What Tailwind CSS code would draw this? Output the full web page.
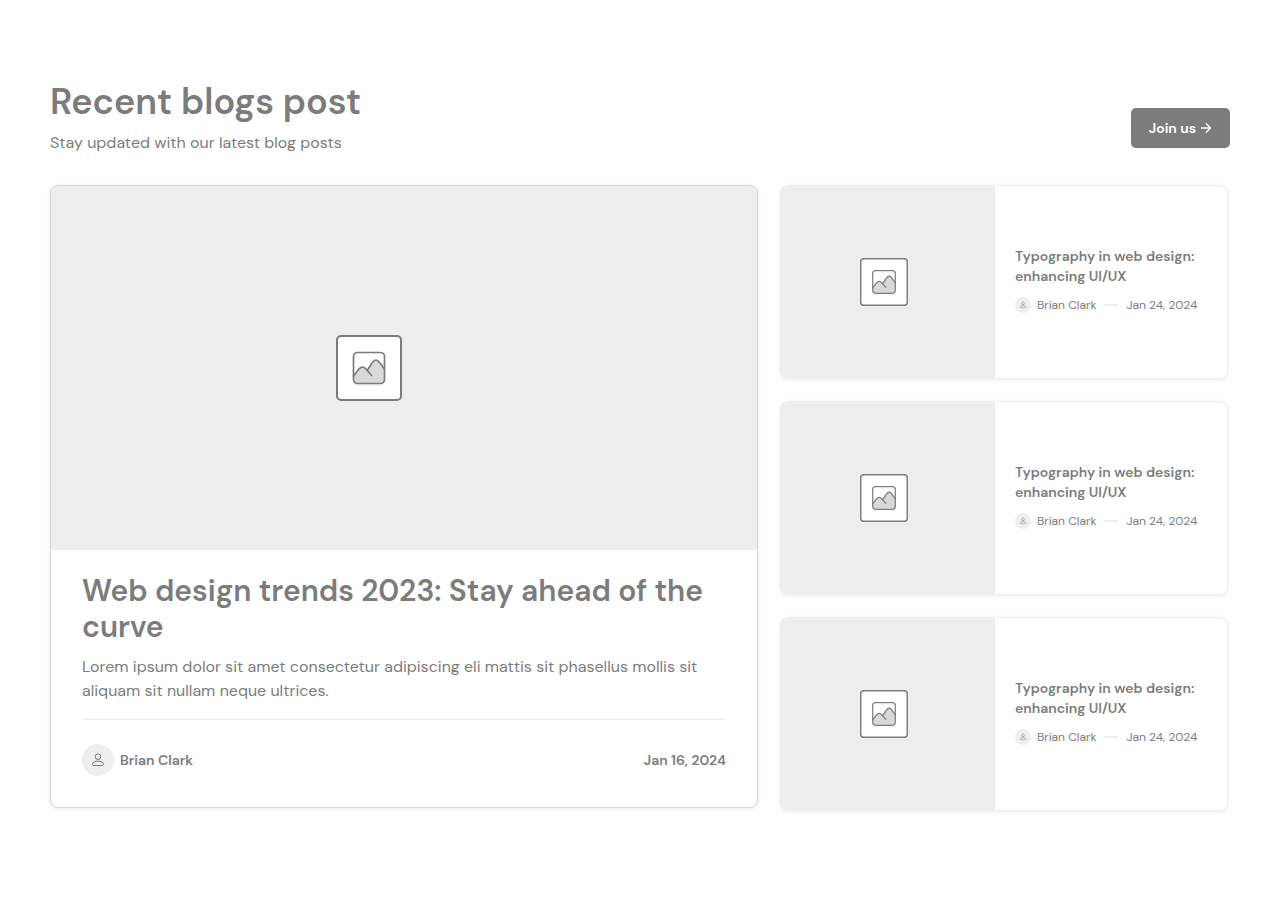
<!DOCTYPE html>
<html lang="en">
<head>
<meta charset="utf-8">
<meta name="viewport" content="width=device-width, initial-scale=1">
<title>Recent blogs post</title>
<script src="https://cdn.jsdelivr.net/npm/@tailwindcss/browser@4"></script>
</head>
<body class="bg-white font-['DM_Sans','Inter',sans-serif] text-[#7c7c7c] antialiased">
<svg class="absolute h-0 w-0" aria-hidden="true">
  <symbol id="picture" viewBox="0 0 66 66">
    <rect x="1" y="1" width="64" height="64" rx="4" fill="#fff" stroke="#7c7c7c" stroke-width="2"/>
    <rect x="17" y="19" width="32" height="32" rx="5" fill="#000" opacity="0.04"/>
    <rect x="17.500" y="17.500" width="31" height="31" rx="4" fill="#fff"/>
    <path d="M17.500 41L23 34q3.500-4 7 0l1.500 1.500L36 28q4-6 8 0l4.500 6V44q0 4.500-4.500 4.500H22q-4.500 0-4.500-4.500Z" fill="#d9d9d9"/>
    <path d="M17.500 41L23 34q3.500-4 7 0l5.500 6.500M31.500 35L36 28q4-6 8 0l4.500 6" fill="none" stroke="#7c7c7c" stroke-width="1.700" stroke-linecap="round" stroke-linejoin="round"/>
    <rect x="17.500" y="17.500" width="31" height="31" rx="4" fill="none" stroke="#7c7c7c" stroke-width="1.700"/>
  </symbol>
  <symbol id="person" viewBox="0 0 32 32">
    <circle cx="16" cy="16" r="16" fill="#eee"/>
    <circle cx="16" cy="12.700" r="2.800" fill="none" stroke="#7c7c7c"/>
    <path d="M10.500 20.300c0-4.200 11-4.200 11 0 0 .8-.4 1.200-1.200 1.200h-8.600c-.8 0-1.200-.4-1.200-1.200Z" fill="none" stroke="#7c7c7c"/>
  </symbol>
</svg>
<main class="px-[50px] pt-20 pb-20">
  <header class="flex items-end justify-between">
    <div>
      <h1 class="text-4xl leading-[43px] font-semibold">Recent blogs post</h1>
      <p class="mt-2 text-base leading-6">Stay updated with our latest blog posts</p>
    </div>
    <button type="button" class="mb-[7px] flex h-10 items-center gap-1 rounded-[5px] bg-[#7c7c7c] px-[18px] text-sm font-semibold text-white shadow-xs">
      Join us
      <svg class="h-3 w-3" viewBox="0 0 12 12" fill="none" stroke="currentColor" stroke-width="1.300" aria-hidden="true"><path d="M1 6h9.500M6 1.500L10.500 6 6 10.500"/></svg>
    </button>
  </header>

  <div class="mt-[30px] grid grid-cols-[708fr_448fr] items-start gap-[22px] pr-[2px]">
    <article class="overflow-hidden rounded-lg border border-[#d6d6d6] bg-white shadow-[0_1px_4px_rgba(0,0,0,0.08)]">
      <div class="flex h-[364px] items-center justify-center bg-[#eee] pr-[70px]">
        <svg class="h-[66px] w-[66px]" role="img" aria-label="Image placeholder"><use href="#picture"/></svg>
      </div>
      <div class="px-[31px] pt-[23px] pb-[31px]">
        <h2 class="text-3xl leading-9 font-semibold">Web design trends 2023: Stay ahead of the curve</h2>
        <p class="mt-[10px] text-base leading-6">Lorem ipsum dolor sit amet consectetur adipiscing eli mattis sit phasellus mollis sit aliquam sit nullam neque ultrices.</p>
        <div class="mt-4 flex items-center justify-between border-t border-[#eee] pt-6 text-sm font-semibold">
          <div class="flex items-center gap-[6px]">
            <svg class="h-8 w-8" aria-hidden="true"><use href="#person"/></svg>
            <span>Brian Clark</span>
          </div>
          <time datetime="2024-01-16">Jan 16, 2024</time>
        </div>
      </div>
    </article>

    <div class="grid gap-[22px]">
      <article class="grid h-[194px] grid-cols-[214fr_232fr] overflow-hidden rounded-lg border border-[#eee] bg-white shadow-[0_1px_4px_rgba(0,0,0,0.08)]">
        <div class="flex items-center justify-center bg-[#eee] pr-2">
          <svg class="h-12 w-12" role="img" aria-label="Image placeholder"><use href="#picture"/></svg>
        </div>
        <div class="flex flex-col justify-center pb-[5px] pl-5">
          <h3 class="text-sm leading-5 font-semibold">Typography in web design:<br>enhancing UI/UX</h3>
          <div class="mt-[11px] flex items-center gap-2 text-xs">
            <span class="flex items-center gap-[6px]"><svg class="h-4 w-4" aria-hidden="true"><use href="#person"/></svg>Brian Clark</span>
            <span class="h-[2px] w-[14px] bg-[#eee]"></span>
            <time datetime="2024-01-24">Jan 24, 2024</time>
          </div>
        </div>
      </article>
      <article class="grid h-[194px] grid-cols-[214fr_232fr] overflow-hidden rounded-lg border border-[#eee] bg-white shadow-[0_1px_4px_rgba(0,0,0,0.08)]">
        <div class="flex items-center justify-center bg-[#eee] pr-2">
          <svg class="h-12 w-12" role="img" aria-label="Image placeholder"><use href="#picture"/></svg>
        </div>
        <div class="flex flex-col justify-center pb-[5px] pl-5">
          <h3 class="text-sm leading-5 font-semibold">Typography in web design:<br>enhancing UI/UX</h3>
          <div class="mt-[11px] flex items-center gap-2 text-xs">
            <span class="flex items-center gap-[6px]"><svg class="h-4 w-4" aria-hidden="true"><use href="#person"/></svg>Brian Clark</span>
            <span class="h-[2px] w-[14px] bg-[#eee]"></span>
            <time datetime="2024-01-24">Jan 24, 2024</time>
          </div>
        </div>
      </article>
      <article class="grid h-[194px] grid-cols-[214fr_232fr] overflow-hidden rounded-lg border border-[#eee] bg-white shadow-[0_1px_4px_rgba(0,0,0,0.08)]">
        <div class="flex items-center justify-center bg-[#eee] pr-2">
          <svg class="h-12 w-12" role="img" aria-label="Image placeholder"><use href="#picture"/></svg>
        </div>
        <div class="flex flex-col justify-center pb-[5px] pl-5">
          <h3 class="text-sm leading-5 font-semibold">Typography in web design:<br>enhancing UI/UX</h3>
          <div class="mt-[11px] flex items-center gap-2 text-xs">
            <span class="flex items-center gap-[6px]"><svg class="h-4 w-4" aria-hidden="true"><use href="#person"/></svg>Brian Clark</span>
            <span class="h-[2px] w-[14px] bg-[#eee]"></span>
            <time datetime="2024-01-24">Jan 24, 2024</time>
          </div>
        </div>
      </article>
    </div>
  </div>
</main>
</body>
</html>
